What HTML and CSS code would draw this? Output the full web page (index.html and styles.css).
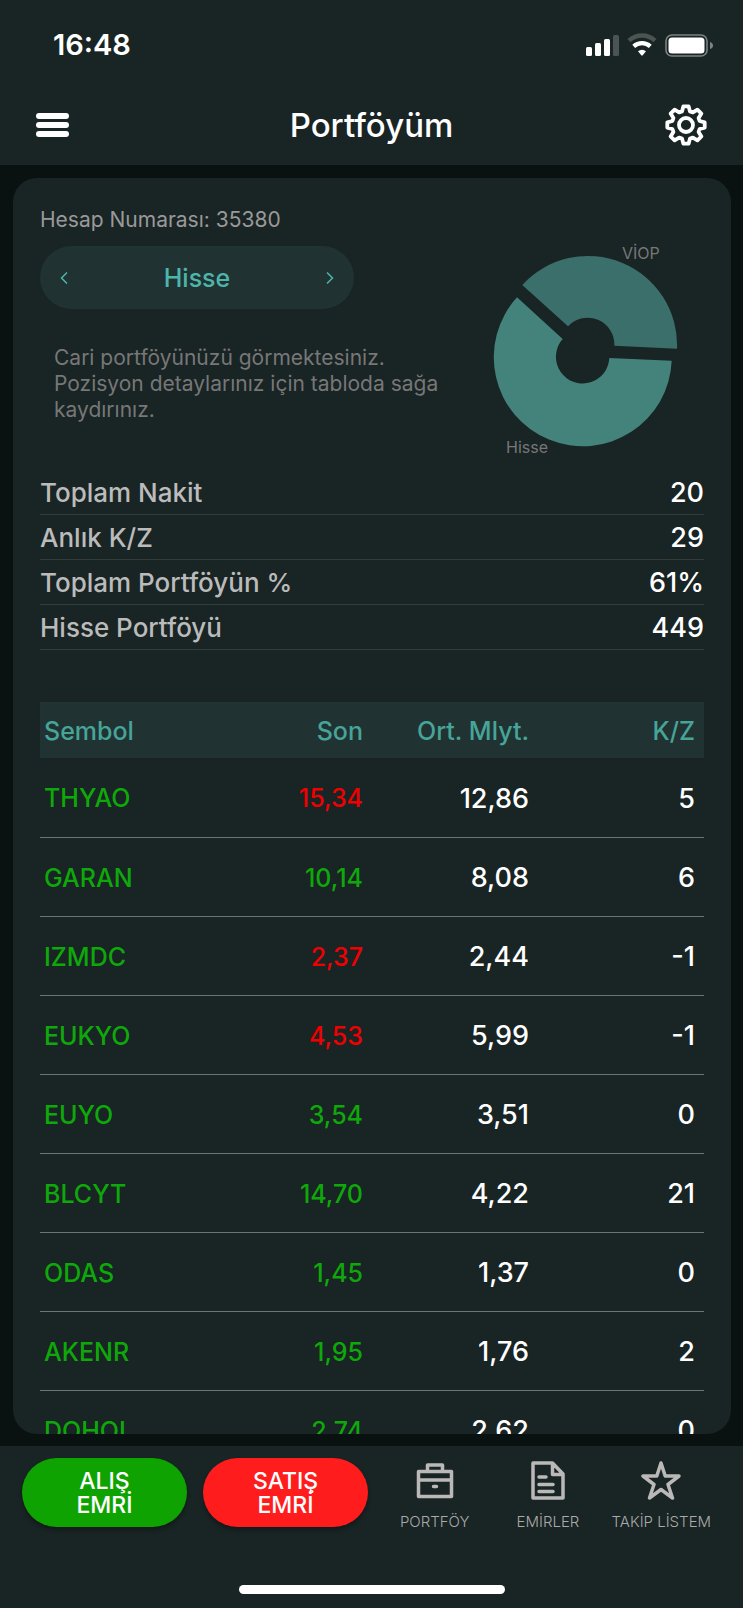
FILE: index.html
```html
<!DOCTYPE html>
<html lang="tr">
<head>
  <meta charset="UTF-8" />
  <meta name="viewport" content="width=device-width, initial-scale=1" />
  <title>Portföyüm</title>
  <link rel="stylesheet" href="styles.css">
</head>
<body>

<header class="header">
  <div class="status-bar">
    <span class="time">16:48</span>
    <svg class="status-icons" width="128" height="24" viewBox="0 0 128 24" aria-hidden="true">
      <g fill="#fff">
        <rect x="0" y="14" width="6" height="9" rx="1.5" />
        <rect x="9" y="10" width="6" height="13" rx="1.5" />
        <rect x="18" y="6" width="6" height="17" rx="1.5" />
        <rect x="27" y="2" width="6" height="21" rx="1.5" fill="#4a5452" />
      </g>
      <path d="M43 7.700a19 19 0 0 1 26 0" fill="none" stroke="#4a5452" stroke-width="4.500" />
      <path d="M47.700 13.400a12.300 12.300 0 0 1 16.600 0" fill="none" stroke="#fff" stroke-width="4.200" />
      <path d="M52 18.300a6 6 0 0 1 8 0L56.700 22.300q-.7.700-1.400 0z" fill="#fff" />
      <rect x="80" y="2" width="41" height="21" rx="6" fill="none" stroke="#7b8280" stroke-width="1.600" />
      <rect x="82.500" y="4.500" width="36" height="16" rx="3.500" fill="#fff" />
      <path d="M124 9q3 1 3 3.500t-3 3.500z" fill="#7b8280" />
    </svg>
  </div>
  <div class="title-bar">
    <button type="button" class="icon-btn" aria-label="Menü">
      <svg width="33" height="24" viewBox="0 0 33 24" fill="#fff">
        <rect width="33" height="6" rx="3" />
        <rect y="9" width="33" height="6" rx="3" />
        <rect y="18" width="33" height="6" rx="3" />
      </svg>
    </button>
    <h1>Portföyüm</h1>
    <button type="button" class="icon-btn" aria-label="Ayarlar">
      <svg width="42" height="42" viewBox="-21 -21 42 42" fill="none" stroke="#fff" stroke-width="3.800" stroke-linejoin="round">
        <path d="M-2.600-18.700H2.600L4-13.600 6.900-12.600 11.400-15.400 15.400-11.400 12.600-6.900 13.600-4 18.700-2.600V2.600L13.600 4 12.600 6.900 15.400 11.400 11.400 15.400 6.900 12.600 4 13.600 2.600 18.700H-2.600L-4 13.600-6.900 12.600-11.400 15.400-15.400 11.400-12.600 6.900-13.600 4-18.700 2.600V-2.600L-13.600-4-12.600-6.900-15.400-11.400-11.400-15.400-6.900-12.600-4-13.600z" />
        <circle r="7" />
      </svg>
    </button>
  </div>
</header>

<main class="card">
  <section class="overview">
    <div class="account">
      <p class="account-no">Hesap Numarası: 35380</p>
      <div class="switcher">
        <button type="button" class="arrow" aria-label="Önceki">
          <svg width="8" height="12" viewBox="0 0 8 12"><path d="M7 .500L1.500 6 7 11.500" /></svg>
        </button>
        <span>Hisse</span>
        <button type="button" class="arrow" aria-label="Sonraki">
          <svg width="8" height="12" viewBox="0 0 8 12"><path d="M1 .500L6.500 6 1 11.500" /></svg>
        </button>
      </div>
      <p class="info">Cari portföyünüzü görmektesiniz. Pozisyon detaylarınız için tabloda sağa kaydırınız.</p>
    </div>
    <svg class="chart" width="223" height="224" viewBox="0 0 223 224">
      <path fill="#3b6f6b" d="M41.300 50A89 89 0 0 1 196 113.700L133.300 110.700A26.700 26.700 0 0 0 87 91.300z" />
      <path fill="#43837b" d="M36 62.300A89 89 0 1 0 190.700 125.700L128.300 123A26.700 26.700 0 1 1 81.700 104z" />
      <text x="141" y="24">VİOP</text>
      <text x="25" y="218">Hisse</text>
    </svg>
  </section>

  <dl class="summary">
    <div><dt>Toplam Nakit</dt><dd>20</dd></div>
    <div><dt>Anlık K/Z</dt><dd>29</dd></div>
    <div><dt>Toplam Portföyün %</dt><dd>61%</dd></div>
    <div><dt>Hisse Portföyü</dt><dd>449</dd></div>
  </dl>

  <table class="positions">
    <thead>
      <tr><th>Sembol</th><th>Son</th><th>Ort. Mlyt.</th><th>K/Z</th></tr>
    </thead>
    <tbody>
      <tr><td>THYAO</td><td class="down">15,34</td><td>12,86</td><td>5</td></tr>
      <tr><td>GARAN</td><td class="up">10,14</td><td>8,08</td><td>6</td></tr>
      <tr><td>IZMDC</td><td class="down">2,37</td><td>2,44</td><td>-1</td></tr>
      <tr><td>EUKYO</td><td class="down">4,53</td><td>5,99</td><td>-1</td></tr>
      <tr><td>EUYO</td><td class="up">3,54</td><td>3,51</td><td>0</td></tr>
      <tr><td>BLCYT</td><td class="up">14,70</td><td>4,22</td><td>21</td></tr>
      <tr><td>ODAS</td><td class="up">1,45</td><td>1,37</td><td>0</td></tr>
      <tr><td>AKENR</td><td class="up">1,95</td><td>1,76</td><td>2</td></tr>
      <tr><td>DOHOL</td><td class="up">2,74</td><td>2,62</td><td>0</td></tr>
    </tbody>
  </table>
</main>

<footer class="footer">
  <div class="actions">
    <button type="button" class="order buy">ALIŞ<br>EMRİ</button>
    <button type="button" class="order sell">SATIŞ<br>EMRİ</button>
    <nav class="tabs">
      <a href="#portfoy">
        <svg width="40" height="40" viewBox="0 0 40 40">
          <path d="M3.500 11.500h33v25h-33zM3.500 20h33M12.500 11V5h15v6M18.500 26.500h3" />
        </svg>
        PORTFÖY
      </a>
      <a href="#emirler">
        <svg width="40" height="40" viewBox="0 0 40 40">
          <path d="M5 3h19.500L35 14v24H5zM24.500 4v10.500h10M11 17h7M11 24.500h14M11 31.500h14" />
        </svg>
        EMİRLER
      </a>
      <a href="#takip">
        <svg width="40" height="40" viewBox="0 0 40 40">
          <path d="M20 3L24.200 16H38L27 24.500 31.500 38 20 29.500 8.500 38 13 24.500 2 16H15.800z" />
        </svg>
        TAKİP LİSTEM
      </a>
    </nav>
  </div>
  <div class="home-bar"></div>
</footer>

</body>
</html>
```

FILE: styles.css
```css
* {
  box-sizing: border-box;
}

body {
  margin: 0;
  height: 100vh;
  display: flex;
  flex-direction: column;
  background: #091210;
  color: #fff;
  font-family: Inter, "Liberation Sans", sans-serif;
}

button {
  font-family: inherit;
  border: none;
  padding: 0;
  background: none;
  color: inherit;
  cursor: pointer;
}

h1, p, dl, dd {
  margin: 0;
}

svg {
  display: block;
}

/* header */
.header {
  height: 165px;
  flex: none;
  background: #192424;
}

.status-bar {
  display: flex;
  justify-content: space-between;
  align-items: center;
  height: 84px;
  padding: 5px 29px 0 53px;
}

.time {
  font-size: 29px;
  font-weight: 600;
}

.title-bar {
  display: flex;
  justify-content: space-between;
  align-items: center;
  height: 81px;
  padding: 0 36px;
}

.icon-btn {
  width: 42px;
}

.title-bar h1 {
  font-size: 33px;
  font-weight: 500;
}

/* card */
.card {
  flex: 1;
  min-height: 0;
  overflow: hidden;
  margin: 13px 12px 12px 13px;
  padding: 29px 27px 0;
  border-radius: 24px;
  background: #192424;
}

.overview {
  display: flex;
  justify-content: space-between;
}

.account {
  flex: 1;
  min-width: 0;
}

.account-no {
  font-size: 21px;
  line-height: 26px;
  color: #999;
}

.switcher {
  display: flex;
  justify-content: space-between;
  align-items: center;
  width: 314px;
  height: 63px;
  margin-top: 13px;
  padding: 0 20px;
  border-radius: 32px;
  background: #213232;
  color: #4db6ac;
  font-size: 25px;
  font-weight: 500;
}

.arrow {
  padding: 8px 0;
}

.arrow path {
  fill: none;
  stroke: #4db6ac;
  stroke-width: 1.5;
}

.info {
  margin: 36px 20px 0 14px;
  font-size: 21px;
  line-height: 26px;
  color: #777;
}

.chart {
  flex: none;
  margin-top: 28px;
}

.chart text {
  font-size: 16px;
  fill: #777;
}

/* totals */
.summary {
  margin-top: 11px;
  font-size: 26px;
  font-weight: 500;
}

.summary div {
  display: flex;
  justify-content: space-between;
  align-items: center;
  height: 45px;
  border-bottom: 1px solid #323a3a;
}

.summary dt {
  color: #bbb;
}

.summary dd {
  font-size: 27px;
}

/* positions table */
.positions {
  width: 100%;
  margin-top: 52px;
  border-collapse: collapse;
  table-layout: fixed;
}

.positions th {
  height: 56px;
  padding: 2px 9px 0 0;
  background: #213232;
  color: #47a498;
  font-size: 25px;
  font-weight: 500;
  text-align: right;
}

.positions td {
  height: 79px;
  padding: 2px 9px 0 0;
  border-bottom: 1px solid #6c7372;
  font-size: 27px;
  font-weight: 500;
  text-align: right;
}

.positions th:first-child,
.positions td:first-child {
  padding: 2px 0 0 4px;
  text-align: left;
}

.positions td:first-child,
.positions .up,
.positions .down {
  font-size: 25px;
  color: #0fa80a;
}

.positions .down {
  color: #f00000;
}

/* footer */
.footer {
  flex: none;
  height: 162px;
  display: flex;
  flex-direction: column;
  justify-content: space-between;
  align-items: center;
  padding: 12px 0 14px;
  background: #192424;
}

.actions {
  display: flex;
  width: 100%;
  padding: 0 25px 0 22px;
}

.order {
  width: 165px;
  height: 69px;
  margin-right: 16px;
  border-radius: 35px;
  font-size: 23px;
  font-weight: 500;
  line-height: 24px;
  box-shadow: 0 3px 4px rgba(0, 0, 0, 0.3);
}

.buy {
  background: #0fa302;
}

.sell {
  margin-right: 10px;
  background: #ff1c1c;
}

.tabs {
  flex: 1;
  display: grid;
  grid-template-columns: repeat(3, 1fr);
}

.tabs a {
  display: flex;
  flex-direction: column;
  align-items: center;
  gap: 13px;
  padding-top: 2px;
  color: #aaa;
  font-size: 15px;
  font-weight: 300;
  line-height: 18px;
  text-decoration: none;
  white-space: nowrap;
}

.tabs path {
  fill: none;
  stroke: #bbb8b8;
  stroke-width: 3.5;
  stroke-linecap: round;
  stroke-linejoin: round;
}

.home-bar {
  width: 266px;
  height: 9px;
  border-radius: 5px;
  background: #fff;
}
```
